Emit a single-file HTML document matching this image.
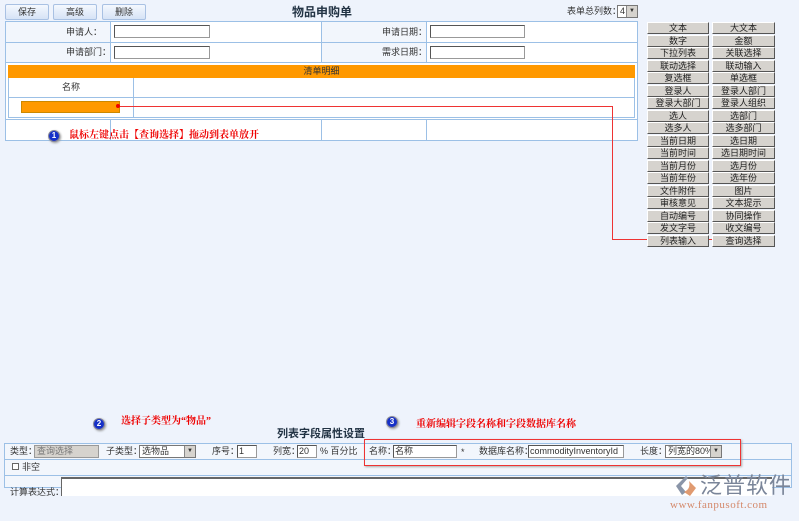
<!DOCTYPE html>
<html><head><meta charset="utf-8"><style>
*{margin:0;padding:0;box-sizing:border-box}
body{width:799px;height:521px;background:#eef3fc;font-family:"Liberation Sans","Noto Sans CJK SC",sans-serif;font-size:9px;line-height:11px;color:#333;position:relative;overflow:hidden}
.a{position:absolute}
.btn{position:absolute;top:4px;height:16px;border:1px solid #a9c1e3;background:linear-gradient(#f4f8fe,#d6e3f6);text-align:center;line-height:14px;font-size:9px;border-radius:2px}
.inp{position:absolute;background:#fff;border:1px solid #999;border-top-color:#555;border-left-color:#555;height:13px}
.pb{position:absolute;height:12px;background:#d6d3ce;border:1px solid #fff;border-right-color:#555;border-bottom-color:#555;text-align:center;font-size:9px;line-height:10px;color:#222}
.red{color:#e00;font-weight:bold;font-family:"Liberation Serif","Noto Serif CJK SC",serif;font-size:10px;line-height:12px}
.circ{position:absolute;width:12px;height:12px;border-radius:50%;background:#1530c8;border:1px solid #889;color:#fff;font-size:8px;text-align:center;line-height:10px;font-weight:bold;box-shadow:1px 1px 2px #999}
.sel{position:absolute;background:#fff;border:1px solid #777;height:13px;font-size:9px;line-height:11px;padding-left:2px}
.sel:after{content:"▼";position:absolute;right:0;top:0;width:10px;height:11px;background:#d6d3ce;font-size:6px;text-align:center;line-height:11px;border-left:1px solid #888}
</style></head><body>
<div class="btn" style="left:5px;width:44px">保存</div>
<div class="btn" style="left:53px;width:44px">高级</div>
<div class="btn" style="left:102px;width:44px">删除</div>
<div class="a" style="left:292px;top:5px;font-size:12px;line-height:14px;font-weight:bold;color:#234">物品申购单</div>
<div class="a" style="left:567px;top:6px">表单总列数：</div>
<div class="sel" style="left:617px;top:5px;width:21px">4</div>

<div class="a" style="left:5px;top:21px;width:633px;height:120px;border:1px solid #9cc0e6;background:#fff"></div>
<div class="a" style="left:6px;top:22px;width:104px;height:40px;background:#f2f6fc"></div>
<div class="a" style="left:322px;top:22px;width:104px;height:40px;background:#f2f6fc"></div>
<div class="a" style="left:5px;top:42px;width:633px;height:1px;background:#9cc0e6"></div>
<div class="a" style="left:5px;top:62px;width:633px;height:1px;background:#9cc0e6"></div>
<div class="a" style="left:5px;top:119px;width:633px;height:1px;background:#9cc0e6"></div>
<div class="a" style="left:110px;top:21px;width:1px;height:41px;background:#9cc0e6"></div>
<div class="a" style="left:321px;top:21px;width:1px;height:41px;background:#9cc0e6"></div>
<div class="a" style="left:426px;top:21px;width:1px;height:41px;background:#9cc0e6"></div>
<div class="a" style="left:110px;top:120px;width:1px;height:21px;background:#9cc0e6"></div>
<div class="a" style="left:321px;top:120px;width:1px;height:21px;background:#9cc0e6"></div>
<div class="a" style="left:426px;top:120px;width:1px;height:21px;background:#9cc0e6"></div>
<div class="a" style="left:66px;top:27px">申请人：</div>
<div class="a" style="left:66px;top:47px">申请部门：</div>
<div class="a" style="left:382px;top:27px">申请日期：</div>
<div class="a" style="left:382px;top:47px">需求日期：</div>
<div class="inp" style="left:114px;top:25px;width:96px"></div>
<div class="inp" style="left:114px;top:46px;width:96px"></div>
<div class="inp" style="left:430px;top:25px;width:95px"></div>
<div class="inp" style="left:430px;top:46px;width:95px"></div>
<div class="a" style="left:8px;top:65px;width:627px;height:53px;border:1px solid #9cc0e6;background:#fff"></div>
<div class="a" style="left:8px;top:65px;width:627px;height:13px;background:#f90;text-align:center;line-height:13px;color:#333">清单明细</div>
<div class="a" style="left:8px;top:97px;width:627px;height:1px;background:#9cc0e6"></div>
<div class="a" style="left:133px;top:78px;width:1px;height:40px;background:#9cc0e6"></div>
<div class="a" style="left:62px;top:82px">名称</div>
<div class="a" style="left:21px;top:101px;width:99px;height:12px;background:#f90;border:1px solid #c80"></div>

<div class="a" style="left:118px;top:106px;width:494px;height:1px;background:#e33"></div>
<div class="a" style="left:612px;top:106px;width:1px;height:134px;background:#e33"></div>
<div class="a" style="left:612px;top:239px;width:112px;height:1px;background:#e33"></div>
<div class="a" style="left:116px;top:104px;width:4px;height:4px;border-radius:50%;background:#e00"></div>
<div class="a" style="left:722px;top:237px;width:4px;height:4px;border-radius:50%;background:#e00"></div>

<div class="circ" style="left:48px;top:130px">1</div>
<div class="a red" style="left:69px;top:130px">鼠标左键点击【查询选择】拖动到表单放开</div>

<div id="pal"></div>
<script>
var L=["文本","数字","下拉列表","联动选择","复选框","登录人","登录大部门","选人","选多人","当前日期","当前时间","当前月份","当前年份","文件附件","审核意见","自动编号","发文字号","列表输入"];
var R=["大文本","金额","关联选择","联动输入","单选框","登录人部门","登录人组织","选部门","选多部门","选日期","选日期时间","选月份","选年份","图片","文本提示","协同操作","收文编号","查询选择"];
var h="";for(var i=0;i<18;i++){var t=22+i*12.5;h+='<div class="pb" style="left:647px;top:'+t+'px;width:62px">'+L[i]+'</div><div class="pb" style="left:712px;top:'+t+'px;width:63px">'+R[i]+'</div>';}
document.getElementById("pal").innerHTML=h;
</script>

<div class="circ" style="left:93px;top:418px">2</div>
<div class="a red" style="left:121px;top:416px">选择子类型为“物品”</div>
<div class="circ" style="left:386px;top:416px">3</div>
<div class="a red" style="left:416px;top:419px">重新编辑字段名称和字段数据库名称</div>
<div class="a" style="left:277px;top:427px;font-size:11px;line-height:14px;font-weight:bold;color:#234">列表字段属性设置</div>

<div class="a" style="left:4px;top:443px;width:788px;height:45px;border:1px solid #9cc0e6;background:#f2f6fc"></div>
<div class="a" style="left:4px;top:459px;width:788px;height:1px;background:#9cc0e6"></div>
<div class="a" style="left:4px;top:475px;width:788px;height:1px;background:#9cc0e6"></div>
<div class="a" style="left:10px;top:446px">类型：</div>
<div class="a" style="left:34px;top:445px;width:65px;height:13px;background:#d6d3ce;border:1px solid #999;color:#777;line-height:11px;padding-left:2px">查询选择</div>
<div class="a" style="left:106px;top:446px">子类型：</div>
<div class="sel" style="left:139px;top:445px;width:57px">选物品</div>
<div class="a" style="left:212px;top:446px">序号：</div>
<div class="inp" style="left:237px;top:445px;width:20px;font-size:9px;line-height:11px;padding-left:1px">1</div>
<div class="a" style="left:273px;top:446px">列宽：</div>
<div class="inp" style="left:297px;top:445px;width:20px;font-size:9px;line-height:11px;padding-left:1px">20</div>
<div class="a" style="left:320px;top:446px">% 百分比</div>
<div class="a" style="left:369px;top:446px">名称：</div>
<div class="inp" style="left:393px;top:445px;width:64px;font-size:9px;line-height:11px;padding-left:1px">名称</div>
<div class="a" style="left:461px;top:447px">*</div>
<div class="a" style="left:479px;top:446px">数据库名称：</div>
<div class="inp" style="left:528px;top:445px;width:96px;font-size:9px;line-height:11px;padding-left:1px">commodityInventoryId</div>
<div class="a" style="left:640px;top:446px">长度：</div>
<div class="sel" style="left:665px;top:445px;width:57px">列宽的80%</div>
<div class="a" style="left:364px;top:439px;width:377px;height:27px;border:1px solid #e33;box-shadow:1px 1px 2px #aaa"></div>
<div class="a" style="left:12px;top:463px;width:7px;height:7px;border:1px solid #666;background:#fff"></div>
<div class="a" style="left:22px;top:462px">非空</div>
<div class="a" style="left:10px;top:487px">计算表达式：</div>
<div class="a" style="left:61px;top:477px;width:711px;height:19px;background:#fff;border-top:2px solid #666;border-left:1px solid #666"></div>

<svg class="a" style="left:672px;top:475px" width="26" height="22" viewBox="0 0 26 22"><path d="M14 1 L4 11 L10 20 L14 17 L9 11 L16 3Z" fill="#8a95a8"/><path d="M17 6 L24 13 L18 21 L12 17 Q19 14 17 6Z" fill="#e09a70"/></svg>
<div class="a" style="left:700px;top:474px;font-size:22px;line-height:24px;color:#7a8599;letter-spacing:1px">泛普软件</div>
<div class="a" style="left:670px;top:499px;font-size:11px;line-height:13px;color:#d4886a;font-family:'Liberation Serif',serif;letter-spacing:0.5px">www.fanpusoft.com</div>
</body></html>
